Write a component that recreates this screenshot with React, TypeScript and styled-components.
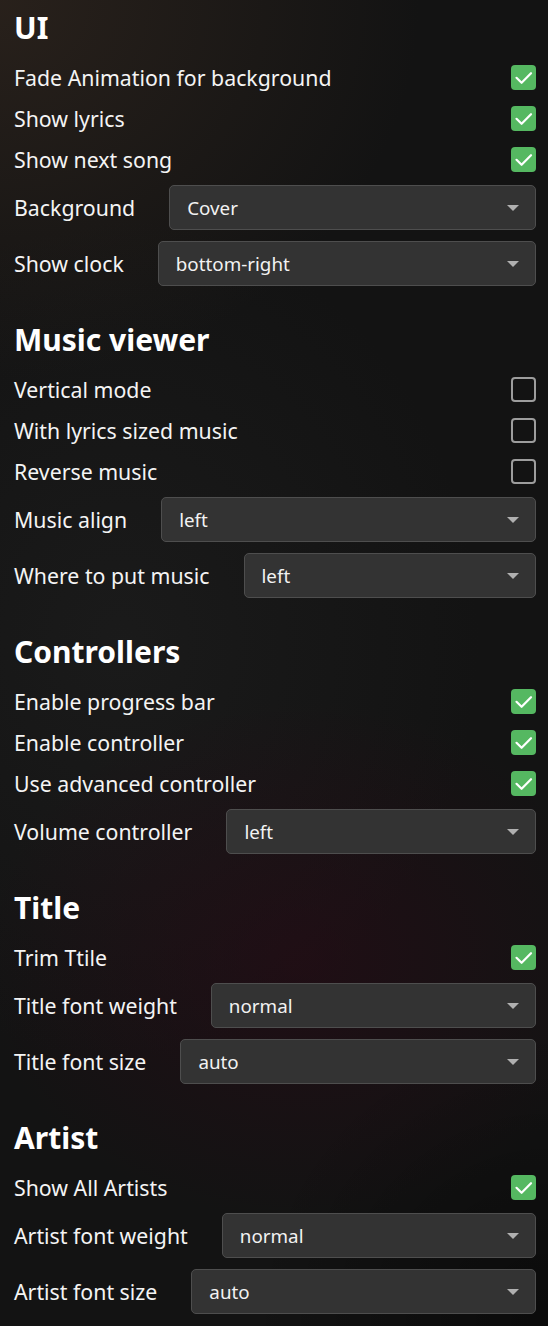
import React from "react";
import styled, { createGlobalStyle } from "styled-components";

const GlobalStyle = createGlobalStyle`
  html, body {
    margin: 0;
    padding: 0;
    min-height: 100%;
  }
  body {
    background-color: #131313;
    background-image:
      radial-gradient(ellipse 420px 380px at 0px 0px, rgba(58, 44, 34, 0.55), rgba(58, 44, 34, 0) 100%),
      radial-gradient(ellipse 320px 260px at 300px 960px, rgba(42, 10, 22, 0.55), rgba(42, 10, 22, 0) 100%),
      radial-gradient(ellipse 360px 420px at 120px 640px, rgba(40, 40, 40, 0.35), rgba(40, 40, 40, 0) 100%),
      radial-gradient(ellipse 300px 300px at 548px 1326px, rgba(0, 0, 0, 0.45), rgba(0, 0, 0, 0) 100%);
    color: #f2f2f2;
    font-family: "Noto Sans", "Open Sans", sans-serif;
  }
`;

const Page = styled.div`
  display: flex;
  flex-direction: column;
  padding: 0 12px 7px 14px;
  min-height: 1326px;
  box-sizing: border-box;
`;

const Section = styled.section`
  display: flex;
  flex-direction: column;
`;

const Heading = styled.h2<{ $first?: boolean }>`
  margin: ${(p) => (p.$first ? "10px" : "30.5px")} 0 10.5px;
  font-size: 30px;
  line-height: 36px;
  font-weight: 700;
  color: #ffffff;
`;

const CheckRow = styled.label`
  display: flex;
  align-items: center;
  justify-content: space-between;
  height: 41px;
`;

const SelectRow = styled.div`
  display: flex;
  align-items: center;
  gap: 34px;
  height: 56px;
`;

const Label = styled.span`
  font-size: 21.3px;
  color: #f4f4f4;
  white-space: nowrap;
`;

const Box = styled.span<{ $checked: boolean }>`
  display: flex;
  align-items: center;
  justify-content: center;
  width: 25px;
  height: 25px;
  box-sizing: border-box;
  border-radius: 4px;
  background: ${(p) => (p.$checked ? "#55b861" : "transparent")};
  border: ${(p) => (p.$checked ? "none" : "2px solid #9d9d9d")};
`;

const SelectBox = styled.div`
  flex: 1;
  display: flex;
  align-items: center;
  justify-content: space-between;
  height: 45px;
  box-sizing: border-box;
  padding: 0 16px 0 17px;
  background: #333333;
  border: 1px solid #4e4e4e;
  border-radius: 5px;
  font-size: 18.8px;
  color: #f2f2f2;
`;

const Arrow = styled.span`
  width: 0;
  height: 0;
  border-left: 6px solid transparent;
  border-right: 6px solid transparent;
  border-top: 6px solid #b0b0b0;
`;

type Item =
  | { kind: "check"; label: string; checked: boolean }
  | { kind: "select"; label: string; value: string };

const sections: { title: string; items: Item[] }[] = [
  {
    title: "UI",
    items: [
      { kind: "check", label: "Fade Animation for background", checked: true },
      { kind: "check", label: "Show lyrics", checked: true },
      { kind: "check", label: "Show next song", checked: true },
      { kind: "select", label: "Background", value: "Cover" },
      { kind: "select", label: "Show clock", value: "bottom-right" },
    ],
  },
  {
    title: "Music viewer",
    items: [
      { kind: "check", label: "Vertical mode", checked: false },
      { kind: "check", label: "With lyrics sized music", checked: false },
      { kind: "check", label: "Reverse music", checked: false },
      { kind: "select", label: "Music align", value: "left" },
      { kind: "select", label: "Where to put music", value: "left" },
    ],
  },
  {
    title: "Controllers",
    items: [
      { kind: "check", label: "Enable progress bar", checked: true },
      { kind: "check", label: "Enable controller", checked: true },
      { kind: "check", label: "Use advanced controller", checked: true },
      { kind: "select", label: "Volume controller", value: "left" },
    ],
  },
  {
    title: "Title",
    items: [
      { kind: "check", label: "Trim Ttile", checked: true },
      { kind: "select", label: "Title font weight", value: "normal" },
      { kind: "select", label: "Title font size", value: "auto" },
    ],
  },
  {
    title: "Artist",
    items: [
      { kind: "check", label: "Show All Artists", checked: true },
      { kind: "select", label: "Artist font weight", value: "normal" },
      { kind: "select", label: "Artist font size", value: "auto" },
    ],
  },
];

function Checkbox({ checked }: { checked: boolean }) {
  return (
    <Box $checked={checked}>
      {checked && (
        <svg width="25" height="25" viewBox="0 0 25 25">
          <path
            d="M5.5 12.8 L10.6 17.8 L20 8.2"
            fill="none"
            stroke="#ffffff"
            strokeWidth="2.2"
            strokeLinecap="round"
            strokeLinejoin="round"
          />
        </svg>
      )}
    </Box>
  );
}

export default function App() {
  return (
    <>
      <GlobalStyle />
      <Page>
        {sections.map((s, i) => (
          <Section key={s.title}>
            <Heading $first={i === 0}>{s.title}</Heading>
            {s.items.map((it) =>
              it.kind === "check" ? (
                <CheckRow key={it.label}>
                  <Label>{it.label}</Label>
                  <Checkbox checked={it.checked} />
                </CheckRow>
              ) : (
                <SelectRow key={it.label}>
                  <Label>{it.label}</Label>
                  <SelectBox>
                    <span>{it.value}</span>
                    <Arrow />
                  </SelectBox>
                </SelectRow>
              )
            )}
          </Section>
        ))}
      </Page>
    </>
  );
}
